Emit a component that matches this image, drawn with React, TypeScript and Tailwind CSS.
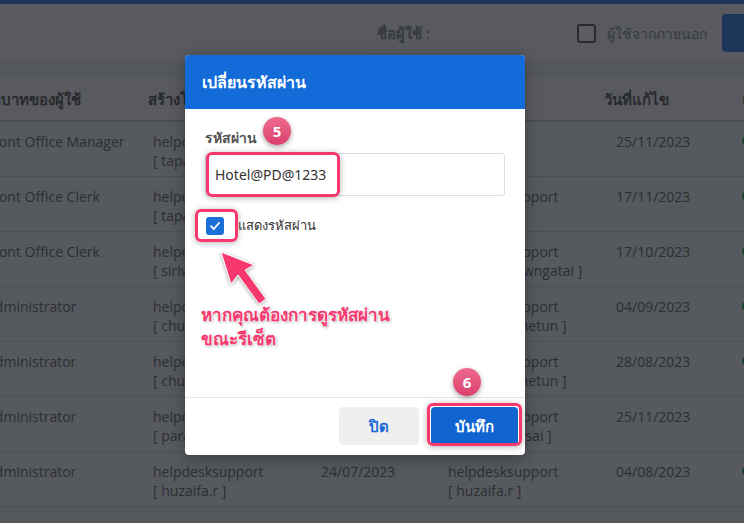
import React from "react";

type Row = {
  role: string;
  createdBy: string;
  createdAt: string;
  updatedBy: string;
  updatedByName: string;
  updatedAt: string;
  active: boolean;
};

const rows: Row[] = [
  { role: "Front Office Manager", createdBy: "tapanat.k", createdAt: "12/05/2023", updatedBy: "", updatedByName: "", updatedAt: "25/11/2023", active: true },
  { role: "Front Office Clerk", createdBy: "tapanat.k", createdAt: "16/06/2023", updatedBy: "helpdesksupport", updatedByName: "pichel", updatedAt: "17/11/2023", active: true },
  { role: "Front Office Clerk", createdBy: "siriwan.p", createdAt: "02/08/2023", updatedBy: "helpdesksupport", updatedByName: "siriwan.hawngatai", updatedAt: "17/10/2023", active: true },
  { role: "Administrator", createdBy: "chutima.s", createdAt: "21/07/2023", updatedBy: "helpdesksupport", updatedByName: "chutima.chetun", updatedAt: "04/09/2023", active: true },
  { role: "Administrator", createdBy: "chutima.s", createdAt: "21/07/2023", updatedBy: "helpdesksupport", updatedByName: "chutima.chetun", updatedAt: "28/08/2023", active: true },
  { role: "Administrator", createdBy: "paradee.w", createdAt: "19/07/2023", updatedBy: "helpdesksupport", updatedByName: "paradee.lesai", updatedAt: "25/11/2023", active: false },
  { role: "Administrator", createdBy: "huzaifa.r", createdAt: "24/07/2023", updatedBy: "helpdesksupport", updatedByName: "huzaifa.r", updatedAt: "04/08/2023", active: true },
];

function Badge({ n, className }: { n: number; className: string }) {
  return (
    <div
      className={`absolute w-[28px] h-[28px] rounded-full bg-gradient-to-b from-[#ee6a8f] to-[#dc3f6c] text-white font-bold text-[15px] flex items-center justify-center shadow-[0_2px_5px_rgba(0,0,0,0.35)] ${className}`}
    >
      {n}
    </div>
  );
}

export default function App() {
  return (
    <div className="relative w-[744px] h-[523px] overflow-hidden bg-[#f3f5f8] font-['Open_Sans','Noto_Sans',sans-serif] text-[#666]">
      {/* page underneath */}
      <div className="h-[4px] bg-[#3479e0]" />
      <div className="h-[58px] flex items-start pt-[10px] pl-[365px] gap-[11px] whitespace-nowrap">
        <div className="shrink-0 w-[201px] h-[38px] rounded border border-[#fbfcfd] flex items-center pl-[11px] text-[15px] font-semibold text-[#888]">
          ชื่อผู้ใช้ :
        </div>
        <div className="shrink-0 flex items-center h-[38px] gap-[11px]">
          <div className="w-[19px] h-[19px] rounded-[3px] border-2 border-[#555] bg-white" />
          <span className="text-[14px] text-[#888]">ผู้ใช้จากภายนอก</span>
        </div>
        <div className="shrink-0 ml-[4px] w-[60px] h-[38px] rounded bg-[#3079e0]" />
      </div>
      <div className="bg-[#e6e9ec] pt-[16px] pb-[16px]">
        <div className="-ml-[17px] w-[800px]">
          <div className="grid grid-cols-[165px_168px_127px_161px_138px_46px] h-[44px] items-center bg-[#f5f6f8] border-b-2 border-[#c3c8ce] text-[15px] font-bold text-[#555]">
            <div className="-ml-[2px]">บทบาทของผู้ใช้</div>
            <div>สร้างโดย</div>
            <div>วันที่สร้าง</div>
            <div>แก้ไขโดย</div>
            <div>วันที่แก้ไข</div>
            <div>สถานะ</div>
          </div>
          {rows.map((r, i) => (
            <div
              key={i}
              className="grid grid-cols-[165px_168px_127px_161px_138px_46px] h-[55px] bg-[#edf0f3] border-b border-[#cfd3d8] text-[14px] leading-[19px] pt-[10px]"
            >
              <div className="pl-[3px]">{r.role}</div>
              <div className="pl-[5px]">
                helpdesksupport
                <br />[ {r.createdBy} ]
              </div>
              <div className="pl-[5px]">{r.createdAt}</div>
              <div className="pl-[5px]">
                {r.updatedBy && (
                  <>
                    {r.updatedBy}
                    <br />[ {r.updatedByName} ]
                  </>
                )}
              </div>
              <div className="pl-[12px]">{r.updatedAt}</div>
              <div className="pt-[4px]">
                {r.active && <div className="w-[10px] h-[10px] rounded-full bg-[#28a745]" />}
              </div>
            </div>
          ))}
        </div>
      </div>

      {/* backdrop */}
      <div className="absolute inset-0 bg-[#15181e]/70" />

      {/* modal */}
      <div className="absolute left-[185px] top-[55px] w-[340px] h-[400px] bg-white rounded shadow-[0_4px_16px_rgba(0,0,0,0.3)] flex flex-col font-['Noto_Sans','Open_Sans',sans-serif]">
        <div className="h-[54px] bg-[#126bd8] rounded-t flex items-center px-[17px] text-white font-bold text-[16px]">
          เปลี่ยนรหัสผ่าน
        </div>
        <div className="h-[288px] px-[20px] pt-[20px]">
          <div className="text-[14px] font-bold text-[#555] leading-[18px] mb-[6px]">รหัสผ่าน</div>
          <div className="h-[43px] border border-[#d9dee4] rounded-[3px] flex items-center pl-[9px] text-[14px] text-[#333]">
            Hotel@PD@1233
          </div>
          <label className="mt-[20px] flex items-center gap-[14px] text-[13px] text-[#333]">
            <span className="ml-[1px] w-[18px] h-[18px] rounded-[3px] bg-[#1a6fd9] flex items-center justify-center">
              <svg width="12" height="12" viewBox="0 0 12 12" fill="none">
                <path d="M2 6.2 L4.8 9 L10 3" stroke="white" strokeWidth="1.8" strokeLinecap="round" strokeLinejoin="round" />
              </svg>
            </span>
            แสดงรหัสผ่าน
          </label>
        </div>
        <div className="flex-1 border-t border-[#e5e5e5] flex justify-end items-start pt-[9px] pr-[7px] gap-[12px]">
          <button className="w-[80px] h-[38px] rounded bg-[#efefef] text-[#1769d6] font-bold text-[15px]">ปิด</button>
          <button className="w-[87px] h-[38px] rounded bg-[#0f64d2] text-white font-bold text-[15px]">บันทึก</button>
        </div>

        {/* annotations */}
        <Badge n={5} className="left-[78px] top-[62px]" />
        <Badge n={6} className="left-[268px] top-[313px]" />
        <div className="absolute left-[21px] top-[97px] w-[134px] h-[45px] rounded-[6px] border-[3px] border-[#f7386f] shadow-[0_1px_6px_rgba(0,0,0,0.3)]" />
        <div className="absolute left-[10px] top-[154px] w-[43px] h-[33px] rounded-[6px] border-[3px] border-[#f7386f] shadow-[0_1px_6px_rgba(0,0,0,0.3)]" />
        <div className="absolute left-[242px] top-[348px] w-[95px] h-[43px] rounded-[6px] border-[3px] border-[#f7386f] shadow-[0_1px_6px_rgba(0,0,0,0.3)]" />
        <svg className="absolute left-0 top-0" width="340" height="300" viewBox="0 0 340 300" fill="none">
          <g transform="translate(-185,-55)" style={{ filter: "drop-shadow(0 1px 2px rgba(0,0,0,0.35))" }}>
            <path
              d="M221 252 L254 265 L245 270 L266 299 L259 304 L238 275 L231 284 Z"
              fill="#f7386f"
              stroke="white"
              strokeWidth="1"
              strokeLinejoin="round"
            />
          </g>
        </svg>
        <div
          className="absolute left-[16px] top-[248px] text-[17px] font-bold leading-[24px] text-[#f7386f]"
          style={{ textShadow: "0 0 2px #fff, 0 0 2px #fff, 1px 1px 3px rgba(0,0,0,0.4)" }}
        >
          หากคุณต้องการดูรหัสผ่าน
          <br />
          ขณะรีเซ็ต
        </div>
      </div>
    </div>
  );
}
